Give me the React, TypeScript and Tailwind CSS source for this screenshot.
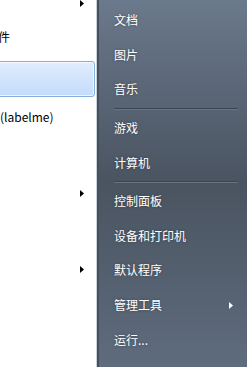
import React from "react";

const font = { fontFamily: '"Noto Sans CJK SC", "Noto Sans", sans-serif' };

const Arrow = ({ color }: { color: string }) => (
  <svg width="4" height="7" viewBox="0 0 4 7" className="block">
    <polygon points="0,0 4,3.5 0,7" fill={color} />
  </svg>
);

type Item = { label: string; sub?: boolean } | "sep";

const items: Item[] = [
  { label: "文档" },
  { label: "图片" },
  { label: "音乐" },
  "sep",
  { label: "游戏" },
  { label: "计算机" },
  "sep",
  { label: "控制面板" },
  { label: "设备和打印机" },
  { label: "默认程序" },
  { label: "管理工具", sub: true },
  { label: "运行..." },
];

const LeftPane = () => (
  <div className="relative h-full w-[96px] shrink-0 overflow-hidden bg-white text-[12px] text-black">
    <div className="-mt-[16px] flex flex-col">
      <div className="flex h-[38px] items-center justify-end pr-[12px]">
        <Arrow color="#000" />
      </div>
      <div className="flex h-[38px] items-center pb-[8px]">
        <span className="-ml-[2px] whitespace-nowrap">件</span>
      </div>
      <div className="flex h-[38px] items-center">
        <div className="h-[36px] w-[99px] -ml-[4px] rounded-[3px] border border-[#84acdd] bg-gradient-to-b from-[#e0edfd] to-[#c3dcfb] shadow-[inset_0_0_0_1px_rgba(255,255,255,0.7)]" />
      </div>
      <div className="flex h-[38px] items-center">
        <span className="whitespace-nowrap">(labelme)</span>
      </div>
      <div className="h-[38px]" />
      <div className="flex h-[38px] items-center justify-end pr-[12px]">
        <Arrow color="#000" />
      </div>
      <div className="h-[38px]" />
      <div className="flex h-[38px] items-center justify-end pr-[12px]">
        <Arrow color="#000" />
      </div>
    </div>
  </div>
);

const RightPane = () => (
  <div className="flex h-full flex-1 flex-col bg-gradient-to-b from-[#6b798c] via-[#4a5461] to-[#5f6c7d] pt-[3px] text-[12px] text-white">
    {items.map((it, i) =>
      it === "sep" ? (
        <div key={i} className="flex h-[4px] shrink-0 flex-col justify-center pl-[15px] pr-[9px]">
          <div className="h-[1px] bg-[#3b4450]" />
          <div className="h-[1px] bg-[#6a7584]" />
        </div>
      ) : (
        <div key={i} className="flex h-[34.6px] shrink-0 items-center justify-between pl-[15px] pr-[14px]">
          <span className="whitespace-nowrap [text-shadow:0_0_3px_rgba(0,0,0,0.35)]">{it.label}</span>
          {it.sub && <Arrow color="#fff" />}
        </div>
      )
    )}
  </div>
);

export default function App() {
  return (
    <div className="flex h-[367px] w-[247px] overflow-hidden" style={font}>
      <LeftPane />
      <div className="h-full w-[1px] bg-[#c9d1db]" />
      <div className="h-full w-[2px] bg-[#46505c]" />
      <RightPane />
    </div>
  );
}
